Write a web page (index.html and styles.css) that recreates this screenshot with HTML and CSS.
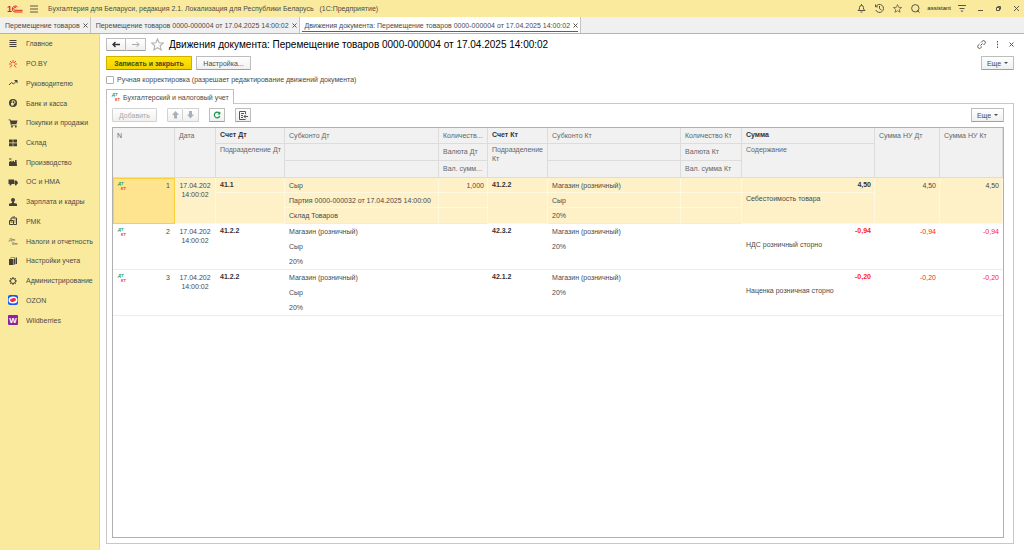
FILE: index.html
```html
<!DOCTYPE html>
<html lang="ru">
  <head>
    <meta charset="utf-8">
    <title>Движения документа</title>
    <link rel="stylesheet" href="styles.css">
  </head>
  <body>
    <header class="titlebar">
      <svg class="logo" viewBox="0 0 16 10">
        <text x="0" y="8">1</text>
        <path d="M10.500 3A3 3 0 1 0 8 8h7.500M9.300 4.200A1.400 1.400 0 1 0 8 6.300h7.500"/>
      </svg>
      <button class="icon-btn menu" aria-label="Меню">
        <svg width="8" height="8" viewBox="0 0 8 8"><path d="M0 1h8M0 4h8M0 7h8"/></svg>
      </button>
      <span class="app-name">Бухгалтерия для Беларуси, редакция 2.1. Локализация для Республики Беларусь &nbsp; (1С:Предприятие)</span>
      <div class="title-tools">
        <button class="icon-btn" aria-label="Оповещения">
          <svg width="9" height="9" viewBox="0 0 9 9"><path d="M1 6.500h7L6.500 5V3.500a2 2 0 0 0-4 0V5zM3.500 8h2M4.500 0v1.500"/></svg>
        </button>
        <button class="icon-btn" aria-label="История">
          <svg width="9" height="9" viewBox="0 0 9 9"><path d="M1 2.500A4 4 0 1 1 .8 6M.5.5v2.300h2.300M4.500 2v2.700l2 1.300"/></svg>
        </button>
        <button class="icon-btn" aria-label="Избранное">
          <svg width="9" height="9" viewBox="0 0 12 12"><path d="M6 .8l1.500 3.600 3.900.3-3 2.500 1 3.800L6 9l-3.400 2 1-3.800-3-2.500 3.900-.3z"/></svg>
        </button>
        <button class="icon-btn" aria-label="Поиск">
          <svg width="9" height="9" viewBox="0 0 9 9"><circle cx="4.300" cy="4.300" r="3.700"/><path d="M6 6l2.500 2.700"/></svg>
        </button>
        <span class="user">assistant</span>
        <button class="icon-btn" aria-label="Сервис">
          <svg width="8" height="9" viewBox="0 0 8 9"><path d="M0 1.500h8M1.500 4.500h5"/><path d="M2.500 6.500h3L4 8.300z" class="solid"/></svg>
        </button>
        <button class="icon-btn win" aria-label="Свернуть">
          <svg width="7" height="7" viewBox="0 0 7 7"><path d="M1 5.500h5"/></svg>
        </button>
        <button class="icon-btn win" aria-label="Развернуть">
          <svg width="7" height="7" viewBox="0 0 7 7"><path d="M1.500 2.500h3v3h-3zM2.500 1.500h3v3"/></svg>
        </button>
        <button class="icon-btn win" aria-label="Закрыть окно">
          <svg width="7" height="7" viewBox="0 0 7 7"><path d="M1 1l5 5M6 1L1 6"/></svg>
        </button>
      </div>
    </header>

    <nav class="tabs">
      <div class="tab"><a href="#">Перемещение товаров</a><button class="close" aria-label="Закрыть"><svg width="5" height="5" viewBox="0 0 5 5"><path d="M.5.5l4 4M4.500.5l-4 4"/></svg></button></div>
      <div class="tab"><a href="#">Перемещение товаров 0000-000004 от 17.04.2025 14:00:02</a><button class="close" aria-label="Закрыть"><svg width="5" height="5" viewBox="0 0 5 5"><path d="M.5.5l4 4M4.500.5l-4 4"/></svg></button></div>
      <div class="tab active"><a href="#">Движения документа: Перемещение товаров 0000-000004 от 17.04.2025 14:00:02</a><button class="close" aria-label="Закрыть"><svg width="5" height="5" viewBox="0 0 5 5"><path d="M.5.5l4 4M4.500.5l-4 4"/></svg></button></div>
    </nav>

    <div class="workspace">
      <nav class="sidebar">
        <ul>
          <li><a href="#"><svg viewBox="0 0 10 10"><path class="line" d="M1.500 1.500h7M1.500 3.500h7M1.500 5.500h7M1.500 7.500h7"/></svg>Главное</a></li>
          <li><a href="#"><svg class="red" viewBox="0 0 10 10"><path class="line" d="M5 1v3M2 2l2 2M8 2L6 4M1 5h2.500M6.500 5H9M4 6L2 8.500M6 6l2 2.500"/></svg>PO.BY</a></li>
          <li><a href="#"><svg viewBox="0 0 10 10"><path class="line" d="M1 7l2.500-2.500L5.500 6 8.500 3"/><path d="M6 2h3.500v3.500z"/></svg>Руководителю</a></li>
          <li><a href="#"><svg viewBox="0 0 10 10"><circle cx="5" cy="5" r="4"/><path class="cut" d="M4.200 8V2.800h1.500a1.300 1.300 0 0 1 0 2.700H3M3 6.700h3"/></svg>Банк и касса</a></li>
          <li><a href="#"><svg viewBox="0 0 10 10"><path d="M.5 1.500h2l.4 1h6.600L8.500 6H3.400l.2.800h5v.8H2.900L1.800 2.300H.5z"/><circle cx="4" cy="8.700" r=".9"/><circle cx="7.800" cy="8.700" r=".9"/></svg>Покупки и продажи</a></li>
          <li><a href="#"><svg viewBox="0 0 10 10"><path d="M1 1.500h3.700v3H1zM5.300 1.500H9v3H5.300zM1 5.200h3.700v3H1zM5.300 5.200H9v3H5.300z"/></svg>Склад</a></li>
          <li><a href="#"><svg viewBox="0 0 10 10"><path d="M1 9V5l2.500-1.500V5L6 3.500V5h.8l.4-2h1.300L9 9zM1 1.500h2.500v1H1z"/></svg>Производство</a></li>
          <li><a href="#"><svg viewBox="0 0 10 10"><path d="M.5 2.500H6V7H.5zM6.400 3.500h2L9.700 5v2H6.400z"/><circle cx="2.500" cy="7.500" r="1"/><circle cx="7.800" cy="7.500" r="1"/></svg>ОС и НМА</a></li>
          <li><a href="#"><svg viewBox="0 0 10 10"><circle cx="5" cy="3" r="2"/><path d="M4 4.500h2V6l3 .8V9H1V6.800L4 6z"/></svg>Зарплата и кадры</a></li>
          <li><a href="#"><svg viewBox="0 0 10 10"><path class="line" d="M1.500 4.500h4v4h-4zM3 4V2h5.500v6.500H6M4.500 1H7"/><path d="M2.500 5.500h2v1h-2zM6.500 3.500h1v1h-1zM6.500 5.500h1v1h-1z"/></svg>РМК</a></li>
          <li><a href="#"><svg viewBox="0 0 10 10"><text x="1" y="5">Дт</text><text x="4" y="9">Кт</text></svg>Налоги и отчетность</a></li>
          <li><a href="#"><svg viewBox="0 0 10 10"><path d="M1 3h4.500v6H1zM6 2.600h1.200v6H6zM7.700 1.500H9V8H7.700zM1.500 2.500l1.500-1h4v.6H4z"/></svg>Настройки учета</a></li>
          <li><a href="#"><svg viewBox="0 0 10 10"><circle cx="5" cy="5" r="2.500" class="line"/><path class="line" d="M5 1v1.500M5 7.500V9M1 5h1.500M7.500 5H9M2.200 2.200l1 1M6.800 6.800l1 1M7.800 2.200l-1 1M3.200 6.800l-1 1"/></svg>Администрирование</a></li>
          <li><a href="#"><svg viewBox="0 0 10 10"><rect width="10" height="10" rx="2" fill="#1459f5"/><ellipse cx="5" cy="5" rx="4.500" ry="3.600" fill="#fff"/><ellipse cx="5" cy="5" rx="3" ry="1.700" fill="#f0284b" transform="rotate(-15 5 5)"/></svg>OZON</a></li>
          <li><a href="#"><svg viewBox="0 0 10 10"><rect width="10" height="10" rx="1" fill="#8d249b"/><text class="wb" x="5" y="8">W</text></svg>Wildberries</a></li>
        </ul>
      </nav>

      <main class="form">
        <div class="form-head">
          <div class="btn-group">
            <button class="btn" aria-label="Назад"><svg width="8" height="7" viewBox="0 0 8 7"><path d="M1 3.500h7M3.500 1L1 3.500 3.500 6" fill="none" stroke="#333" stroke-width="1.400"/></svg></button>
            <button class="btn" aria-label="Вперед"><svg width="8" height="7" viewBox="0 0 8 7"><path d="M0 3.500h7M4.500 1L7 3.500 4.500 6" fill="none" stroke="#aaa"/></svg></button>
          </div>
          <button class="icon-btn fav" aria-label="В избранное"><svg width="13" height="13" viewBox="0 0 12 12"><path d="M6 .8l1.500 3.600 3.900.3-3 2.500 1 3.800L6 9l-3.400 2 1-3.800-3-2.500 3.900-.3z"/></svg></button>
          <h1>Движения документа: Перемещение товаров 0000-000004 от 17.04.2025 14:00:02</h1>
          <div class="form-tools">
            <button class="icon-btn" aria-label="Ссылка"><svg width="9" height="9" viewBox="0 0 9 9"><path d="M3.500 5.500l2-2M4 2.500l1.300-1.300a1.700 1.700 0 0 1 2.500 2.500L6.500 5M5 6.500L3.700 7.800a1.700 1.700 0 0 1-2.500-2.500L2.500 4"/></svg></button>
            <button class="icon-btn" aria-label="Еще действия"><svg width="3" height="7" viewBox="0 0 3 7"><path class="solid" d="M1 0h1v1.500H1zM1 2.700h1v1.500H1zM1 5.400h1V7H1z"/></svg></button>
            <button class="icon-btn" aria-label="Закрыть форму"><svg width="5" height="5" viewBox="0 0 5 5"><path d="M.5.5l4 4M4.500.5l-4 4"/></svg></button>
          </div>
        </div>

        <div class="commands">
          <button class="btn primary">Записать и закрыть</button>
          <button class="btn setup">Настройка...</button>
          <button class="btn more">Еще</button>
        </div>

        <div class="manual">
          <input type="checkbox" id="manual">
          <label for="manual">Ручная корректировка (разрешает редактирование движений документа)</label>
        </div>

        <button class="page-tab"><svg class="dtkt" viewBox="0 0 11 10"><text class="dt" x="1" y="4">ДТ</text><text class="kt" x="4" y="9">КТ</text></svg>Бухгалтерский и налоговый учет</button>

        <section class="page">
          <div class="toolbar">
            <button class="btn add" disabled>Добавить</button>
            <div class="btn-group">
              <button class="btn" disabled aria-label="Вверх"><svg width="7" height="8" viewBox="0 0 7 8"><path d="M3.500 0L7 4H5v3.500H2V4H0z" fill="#aab0b8"/></svg></button>
              <button class="btn" disabled aria-label="Вниз"><svg width="7" height="8" viewBox="0 0 7 8"><path d="M3.500 7.500L7 3.500H5V0H2v3.500H0z" fill="#aab0b8"/></svg></button>
            </div>
            <button class="btn square" aria-label="Обновить"><svg width="8" height="8" viewBox="0 0 8 8"><path d="M6.300 2.200A2.800 2.800 0 1 0 6.800 5" fill="none" stroke="#149447" stroke-width="1.200"/><path d="M7.300.5v3H4.500z" fill="#149447"/></svg></button>
            <button class="btn square" aria-label="Настроить список"><svg width="9" height="9" viewBox="0 0 9 9"><path d="M6.500 3V.5h-6v8h6M2 2.500h3M2 4.500h2M2 6.500h2M9 5.500H5M6.800 3.700L5 5.500l1.800 1.800" fill="none" stroke="#555"/></svg></button>
            <button class="btn more">Еще</button>
          </div>

          <div class="grid">
            <table>
              <colgroup>
                <col class="c-num"><col class="c-date"><col class="c-acc-dt"><col class="c-sub-dt"><col class="c-qty-dt"><col class="c-acc-kt"><col class="c-sub-kt"><col class="c-qty-kt"><col class="c-sum"><col class="c-nu"><col>
              </colgroup>
              <thead>
                <tr>
                  <th rowspan="3">N</th>
                  <th rowspan="3">Дата</th>
                  <th class="strong">Счет Дт</th>
                  <th>Субконто Дт</th>
                  <th>Количеств...</th>
                  <th class="strong">Счет Кт</th>
                  <th>Субконто Кт</th>
                  <th>Количество Кт</th>
                  <th class="strong">Сумма</th>
                  <th rowspan="3">Сумма НУ Дт</th>
                  <th rowspan="3">Сумма НУ Кт</th>
                </tr>
                <tr>
                  <th rowspan="2" class="second">Подразделение Дт</th>
                  <th></th>
                  <th>Валюта Дт</th>
                  <th rowspan="2" class="second">Подразделение Кт</th>
                  <th></th>
                  <th>Валюта Кт</th>
                  <th rowspan="2" class="second">Содержание</th>
                </tr>
                <tr>
                  <th></th>
                  <th>Вал. сумм...</th>
                  <th></th>
                  <th>Вал. сумма Кт</th>
                </tr>
              </thead>
              <tbody class="selected">
                <tr>
                  <td rowspan="3" class="current"><div class="num"><svg class="dtkt" viewBox="0 0 11 10"><text class="dt" x="1" y="4">ДТ</text><text class="kt" x="4" y="9">КТ</text></svg>1</div></td>
                  <td rowspan="3" class="date">17.04.202<br>14:00:02</td>
                  <td class="strong">41.1</td>
                  <td>Сыр</td>
                  <td class="right">1,000</td>
                  <td class="strong">41.2.2</td>
                  <td>Магазин (розничный)</td>
                  <td></td>
                  <td class="strong right">4,50</td>
                  <td rowspan="3" class="right">4,50</td>
                  <td rowspan="3" class="right">4,50</td>
                </tr>
                <tr>
                  <td rowspan="2"></td>
                  <td>Партия 0000-000032 от 17.04.2025 14:00:00</td>
                  <td></td>
                  <td rowspan="2"></td>
                  <td>Сыр</td>
                  <td></td>
                  <td rowspan="2" class="second">Себестоимость товара</td>
                </tr>
                <tr>
                  <td>Склад Товаров</td>
                  <td></td>
                  <td>20%</td>
                  <td></td>
                </tr>
              </tbody>
              <tbody>
                <tr>
                  <td rowspan="3"><div class="num"><svg class="dtkt" viewBox="0 0 11 10"><text class="dt" x="1" y="4">ДТ</text><text class="kt" x="4" y="9">КТ</text></svg>2</div></td>
                  <td rowspan="3" class="date">17.04.202<br>14:00:02</td>
                  <td class="strong">41.2.2</td>
                  <td>Магазин (розничный)</td>
                  <td></td>
                  <td class="strong">42.3.2</td>
                  <td>Магазин (розничный)</td>
                  <td></td>
                  <td class="strong right neg">-0,94</td>
                  <td rowspan="3" class="right neg">-0,94</td>
                  <td rowspan="3" class="right neg">-0,94</td>
                </tr>
                <tr>
                  <td rowspan="2"></td>
                  <td>Сыр</td>
                  <td></td>
                  <td rowspan="2"></td>
                  <td>20%</td>
                  <td></td>
                  <td rowspan="2" class="second">НДС розничный сторно</td>
                </tr>
                <tr>
                  <td>20%</td>
                  <td></td>
                  <td></td>
                  <td></td>
                </tr>
              </tbody>
              <tbody>
                <tr>
                  <td rowspan="3"><div class="num"><svg class="dtkt" viewBox="0 0 11 10"><text class="dt" x="1" y="4">ДТ</text><text class="kt" x="4" y="9">КТ</text></svg>3</div></td>
                  <td rowspan="3" class="date">17.04.202<br>14:00:02</td>
                  <td class="strong">41.2.2</td>
                  <td>Магазин (розничный)</td>
                  <td></td>
                  <td class="strong">42.1.2</td>
                  <td>Магазин (розничный)</td>
                  <td></td>
                  <td class="strong right neg">-0,20</td>
                  <td rowspan="3" class="right neg">-0,20</td>
                  <td rowspan="3" class="right neg">-0,20</td>
                </tr>
                <tr>
                  <td rowspan="2"></td>
                  <td>Сыр</td>
                  <td></td>
                  <td rowspan="2"></td>
                  <td>20%</td>
                  <td></td>
                  <td rowspan="2" class="second">Наценка розничная сторно</td>
                </tr>
                <tr>
                  <td>20%</td>
                  <td></td>
                  <td></td>
                  <td></td>
                </tr>
              </tbody>
            </table>
          </div>
        </section>
      </main>
    </div>
  </body>
</html>
```

FILE: styles.css
```css
* {
  box-sizing: border-box;
}

body {
  margin: 0;
  height: 100vh;
  display: flex;
  flex-direction: column;
  font-family: "Liberation Sans", Arial, sans-serif;
  font-size: 7px;
  line-height: 9px;
  color: #4a4a4a;
  background-color: #fff;
}

button {
  font: inherit;
  color: inherit;
  padding: 0;
  border: none;
  background: none;
}

a {
  color: inherit;
  text-decoration: none;
}

.icon-btn {
  display: flex;
}

.icon-btn svg,
.close svg {
  fill: none;
  stroke: #5a5645;
}

.icon-btn .solid {
  fill: #5a5645;
  stroke: none;
}

/* title bar */
.titlebar {
  display: flex;
  align-items: center;
  height: 17px;
  padding: 0 4px 0 7px;
  background-color: #faea9d;
}

.logo {
  width: 16px;
  height: 10px;
  fill: none;
  stroke: #d9261c;
}

.logo text {
  font-size: 9px;
  font-weight: bold;
  fill: #d9261c;
  stroke: none;
}

.menu {
  margin: 0 10px 0 7px;
}

.title-tools {
  margin-left: auto;
  display: flex;
  align-items: center;
  gap: 9px;
}

.user {
  margin: 0 -2px;
  font-size: 6px;
  color: #222;
}

.title-tools .win {
  margin-left: 2px;
}

/* open windows */
.tabs {
  display: flex;
  height: 17px;
  background-color: #f0f0f0;
  border-bottom: 1px solid #b4b4b4;
}

.tab {
  display: flex;
  align-items: center;
  gap: 3px;
  padding: 0 2px 0 5px;
  border-right: 1px solid #c4c4c4;
}

.tab.active {
  background: linear-gradient(#009646, #009646) center bottom 1px / calc(100% - 4px) 1px no-repeat #fff;
}

.close {
  display: flex;
}

.workspace {
  flex: 1;
  display: flex;
  min-height: 0;
}

/* sections */
.sidebar {
  width: 100px;
  flex-shrink: 0;
  background-color: #faea9d;
  border-right: 1px solid #ddd6b0;
}

.sidebar ul {
  display: grid;
  grid-auto-rows: 1fr;
  height: 296px;
  margin: 0;
  padding: 0;
  list-style: none;
}

.sidebar a {
  display: flex;
  align-items: center;
  gap: 8px;
  height: 100%;
  padding-left: 8px;
}

.sidebar svg {
  width: 10px;
  height: 10px;
  fill: #453f38;
}

.sidebar .line {
  fill: none;
  stroke: #453f38;
}

.sidebar .red .line {
  stroke: #e8492f;
}

.sidebar .cut {
  fill: none;
  stroke: #faea9d;
}

.sidebar text {
  font-size: 4px;
  font-style: italic;
}

.sidebar .wb {
  font-size: 8px;
  font-style: normal;
  font-weight: bold;
  text-anchor: middle;
  fill: #fff;
}

/* form */
.form {
  flex: 1;
  min-width: 0;
  display: flex;
  flex-direction: column;
  padding: 4px 10px 6px 6px;
}

.form-head {
  display: flex;
  align-items: center;
  height: 13px;
}

.form h1 {
  margin: 0;
  font-size: 10px;
  font-weight: normal;
  line-height: 13px;
  color: #000;
}

.fav {
  margin: 0 5px;
}

.icon-btn.fav svg {
  stroke: #b0b0b0;
}

.form-tools {
  margin-left: auto;
  display: flex;
  align-items: center;
  gap: 10px;
}

.btn {
  display: flex;
  align-items: center;
  justify-content: center;
  height: 14px;
  border: 1px solid #bdbdbd;
  border-bottom-color: #a0a0a0;
  border-radius: 1px;
  background: linear-gradient(#fff, #f0f0f0);
}

.btn:disabled {
  color: #a8a8a8;
  border-color: #d2d2d2;
}

.btn-group {
  display: flex;
}

.btn-group .btn {
  width: 16px;
}

.form-head .btn-group .btn {
  width: 20px;
  height: 13px;
}

.btn-group .btn + .btn {
  border-left: none;
}

.commands {
  display: flex;
  gap: 4px;
  margin: 5px 0;
}

.primary {
  width: 86px;
  font-weight: bold;
  color: #4d4417;
  border-color: #d0b000;
  border-bottom-color: #a89000;
  background: linear-gradient(#ffe60a, #f2d400);
}

.setup {
  width: 55px;
}

.more {
  width: 33px;
  gap: 3px;
  margin-left: auto;
}

.more::after {
  content: "";
  border: 2px solid transparent;
  border-top-color: #4a4a4a;
  border-bottom: none;
}

.manual {
  display: flex;
  align-items: center;
  gap: 3px;
  margin-bottom: 5px;
}

.manual input {
  appearance: none;
  width: 8px;
  height: 8px;
  margin: 0;
  border: 1px solid #b0b0b0;
  border-radius: 1px;
  background-color: #fff;
}

.page-tab {
  z-index: 1;
  display: flex;
  align-items: center;
  align-self: flex-start;
  gap: 1px;
  width: 128px;
  height: 15px;
  margin-bottom: -1px;
  padding-left: 4px;
  border: 1px solid #c0c0c0;
  border-bottom: none;
  background-color: #fff;
}

.dtkt {
  width: 11px;
  height: 10px;
}

.dt,
.kt {
  font-size: 4px;
  font-weight: bold;
  font-style: italic;
  fill: #149447;
}

.kt {
  font-style: normal;
  fill: #e8392f;
}

.page {
  flex: 1;
  display: flex;
  flex-direction: column;
  min-height: 0;
  padding: 4px 9px 5px 5px;
  border: 1px solid #c8c8c8;
}

.toolbar {
  display: flex;
  gap: 10px;
  margin-bottom: 5px;
}

.add {
  width: 45px;
}

.square {
  width: 16px;
}

/* entries */
.grid {
  flex: 1;
  min-height: 0;
  overflow: hidden;
  border: 1px solid #b0b0b0;
}

table {
  width: 100%;
  table-layout: fixed;
  border-spacing: 0;
}

.c-num { width: 62px; }
.c-date { width: 41px; }
.c-acc-dt { width: 69px; }
.c-sub-dt { width: 154px; }
.c-qty-dt { width: 49px; }
.c-acc-kt { width: 60px; }
.c-sub-kt { width: 133px; }
.c-qty-kt { width: 61px; }
.c-sum { width: 133px; }
.c-nu { width: 65px; }

th,
td {
  padding: 3px 4px 0;
  vertical-align: top;
  text-align: left;
  font-weight: normal;
  border-right: 1px solid transparent;
  border-bottom: 1px solid transparent;
}

th {
  height: 17px;
  padding-right: 1px;
  color: #666;
  background-color: #f1f1f1;
  border-color: #dcdcdc;
}

thead tr:first-child th {
  height: 16px;
}

td {
  height: 15px;
}

tbody tr:last-child td {
  height: 16px;
}

tbody tr:last-child td,
td[rowspan="3"],
td[rowspan="2"] {
  border-bottom-color: #ececec;
}

.strong {
  padding-top: 2px;
  font-weight: bold;
  color: #333;
}

.second {
  padding-top: 1px;
}

.right {
  padding-right: 3px;
  text-align: right;
}

.date {
  text-align: center;
}

.neg {
  color: #ff1a1a;
}

.selected td {
  background-color: #fef1c7;
  border-color: #fff8e0;
}

.selected .current {
  padding: 2px 4px 0 3px;
  background-color: #fee48f;
  border: 1px solid #fbd03a;
}

.num {
  display: flex;
  justify-content: space-between;
}
```
